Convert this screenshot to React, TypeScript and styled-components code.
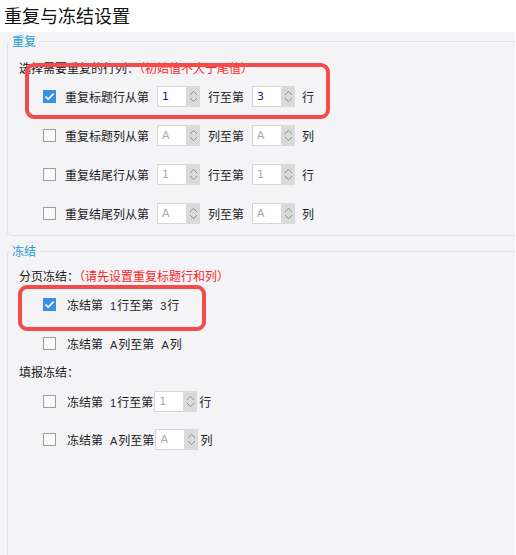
import React from 'react'
import styled, { createGlobalStyle } from 'styled-components'

const GlobalStyle = createGlobalStyle`
  html, body {
    margin: 0;
    padding: 0;
    background: #ffffff;
  }
  body {
    font-family: "Noto Sans CJK SC", "Noto Sans", sans-serif;
    color: #1a1a1a;
  }
`

const Page = styled.div`
  width: 516px;
  height: 555px;
  overflow: hidden;
  position: relative;
  background: #ffffff;
`

const Title = styled.div`
  height: 32px;
  padding-left: 4px;
  font-size: 18px;
  line-height: 30px;
  color: #111;
`

const Panel = styled.div`
  height: 523px;
  margin-right: 1px;
  background: #f4f4f6;
  padding: 1px 0 0 7px;
  box-sizing: border-box;
  overflow: hidden;
`

const Fieldset = styled.fieldset<{ $open?: boolean }>`
  margin: 0 -20px 0 0;
  padding: 0 0 ${p => (p.$open ? '200px' : '2px')} 11px;
  border: 1px solid #e1e1e5;
  border-radius: 4px;
  min-width: 0;
  & + & {
    margin-top: 7px;
  }
`

const Legend = styled.legend`
  margin-left: -10px;
  padding: 0 3px 0 3px;
  font-size: 12px;
  line-height: 16px;
  color: #1b9ad6;
`

const GroupLabel = styled.div<{ $top: number }>`
  margin-top: ${p => p.$top}px;
  height: 18px;
  font-size: 12px;
  line-height: 18px;
  color: #1a1a1a;
  white-space: nowrap;
`

const Hint = styled.span`
  color: #ff1e1e;
`

const Row = styled.div<{ $h?: number }>`
  display: flex;
  align-items: center;
  height: ${p => p.$h ?? 39}px;
  padding-left: 24px;
  font-size: 12px;
  white-space: pre;
`

const Check = styled.span<{ $on?: boolean }>`
  width: 13px;
  height: 13px;
  box-sizing: border-box;
  flex: none;
  display: flex;
  align-items: center;
  justify-content: center;
  border: 1px solid ${p => (p.$on ? '#3b8fe6' : '#9c9c9c')};
  background: ${p => (p.$on ? '#3b8fe6' : '#fafafa')};
  margin-right: 9px;
`

const Text = styled.span<{ $gap?: number }>`
  margin-right: ${p => p.$gap ?? 0}px;
  color: #1a1a1a;
`

const FreezeText = styled.span`
  margin-left: 2px;
  margin-right: 1px;
  color: #1a1a1a;
`

const Num = styled.span`
  display: inline-block;
  margin: 0 1px 0 7px;
  font-family: "Liberation Sans", sans-serif;
  font-size: 11px;
  color: #223;
`

const Spin = styled.div<{ $gap?: number }>`
  display: flex;
  height: 21px;
  margin-right: ${p => p.$gap ?? 0}px;
`

const SpinField = styled.div<{ $active?: boolean; $w?: number }>`
  width: ${p => p.$w ?? 29}px;
  box-sizing: border-box;
  background: #ffffff;
  border: 1px solid #d6d6d6;
  border-right: none;
  padding-left: 4px;
  font-family: "DejaVu Sans", sans-serif;
  font-size: 11px;
  line-height: 19px;
  color: ${p => (p.$active ? '#1e1e78' : '#b3a79a')};
`

const SpinButtons = styled.div`
  width: 14px;
  background: #dadadb;
  display: flex;
  flex-direction: column;
  align-items: center;
  justify-content: center;
  gap: 1px;
`

const Annotation = styled.div`
  position: absolute;
  border: 4px solid #f44c4c;
  border-radius: 9px;
  box-sizing: border-box;
  pointer-events: none;
`

const Tick = () => (
  <svg width="11" height="9" viewBox="0 0 11 9">
    <path d="M1.5 4.6 L4.2 7.2 L9.6 1.6" fill="none" stroke="#fff" strokeWidth="1.6" />
  </svg>
)

const Chevrons = () => (
  <>
    <svg width="9" height="6" viewBox="0 0 9 6">
      <path d="M1 5 L4.5 1.3 L8 5" fill="none" stroke="#8d8d8d" strokeWidth="1" />
    </svg>
    <svg width="9" height="6" viewBox="0 0 9 6">
      <path d="M1 1 L4.5 4.7 L8 1" fill="none" stroke="#8d8d8d" strokeWidth="1" />
    </svg>
  </>
)

const Spinner: React.FC<{ value: string; active?: boolean; gap?: number }> = ({ value, active, gap }) => (
  <Spin $gap={gap}>
    <SpinField $active={active}>{value}</SpinField>
    <SpinButtons>
      <Chevrons />
    </SpinButtons>
  </Spin>
)

const repeatRows = [
  { on: true, label: '重复标题行从第', v1: '1', mid: '行至第', v2: '3', unit: '行' },
  { on: false, label: '重复标题列从第', v1: 'A', mid: '列至第', v2: 'A', unit: '列' },
  { on: false, label: '重复结尾行从第', v1: '1', mid: '行至第', v2: '1', unit: '行' },
  { on: false, label: '重复结尾列从第', v1: 'A', mid: '列至第', v2: 'A', unit: '列' },
]

export default function App() {
  return (
    <Page>
      <GlobalStyle />
      <Title>重复与冻结设置</Title>
      <Panel>
        <Fieldset>
          <Legend>重复</Legend>
          <GroupLabel $top={10}>
            选择需要重复的行列：<Hint>（初始值不大于尾值）</Hint>
          </GroupLabel>
          {repeatRows.map((r, i) => (
            <Row key={i}>
              <Check $on={r.on}>{r.on && <Tick />}</Check>
              <Text $gap={8}>{r.label}</Text>
              <Spinner value={r.v1} active={r.on} gap={8} />
              <Text $gap={8}>{r.mid}</Text>
              <Spinner value={r.v2} active={r.on} gap={7} />
              <Text>{r.unit}</Text>
            </Row>
          ))}
        </Fieldset>

        <Fieldset $open>
          <Legend>冻结</Legend>
          <GroupLabel $top={8}>
            分页冻结：<Hint>（请先设置重复标题行和列）</Hint>
          </GroupLabel>
          <Row>
            <Check $on>
              <Tick />
            </Check>
            <FreezeText>
              冻结第<Num>1</Num>行至第<Num>3</Num>行
            </FreezeText>
          </Row>
          <Row>
            <Check />
            <FreezeText>
              冻结第<Num>A</Num>列至第<Num>A</Num>列
            </FreezeText>
          </Row>
          <GroupLabel $top={0}>填报冻结：</GroupLabel>
          <Row $h={40}>
            <Check />
            <FreezeText>
              冻结第<Num>1</Num>行至第
            </FreezeText>
            <Spinner value="1" gap={2} />
            <Text>行</Text>
          </Row>
          <Row $h={36}>
            <Check />
            <FreezeText>
              冻结第<Num>A</Num>列至第
            </FreezeText>
            <Spinner value="A" gap={2} />
            <Text>列</Text>
          </Row>
        </Fieldset>
      </Panel>
      <Annotation style={{ left: 25, top: 63, width: 305, height: 56 }} />
      <Annotation style={{ left: 18, top: 285, width: 188, height: 46 }} />
    </Page>
  )
}
